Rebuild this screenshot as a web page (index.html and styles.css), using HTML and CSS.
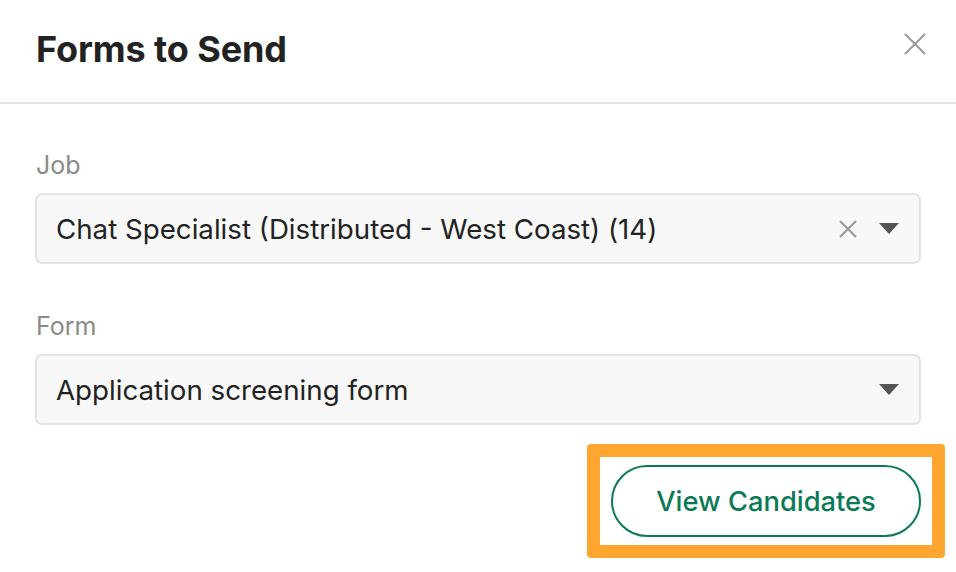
FILE: index.html
```html
<!DOCTYPE html>
<html lang="en">
<head>
<meta charset="utf-8">
<title>Forms to Send</title>
<link rel="stylesheet" href="styles.css">
</head>
<body>
<div class="modal">
  <header class="modal-header">
    <h1 class="modal-title">Forms to Send</h1>
    <button class="close-btn" aria-label="Close">
      <svg width="22" height="22" viewBox="0 0 22 22"><path d="M1 1 L21 21 M21 1 L1 21" stroke="#9a9a9a" stroke-width="2" fill="none"/></svg>
    </button>
  </header>
  <div class="modal-body">
    <div class="field">
      <label class="field-label">Job</label>
      <div class="select">
        <span class="select-value">Chat Specialist (Distributed - West Coast) (14)</span>
        <span class="select-icons">
          <svg class="clear-icon" width="18" height="18" viewBox="0 0 18 18"><path d="M1 1 L17 17 M17 1 L1 17" stroke="#999" stroke-width="2.2" fill="none"/></svg>
          <svg class="caret" width="20" height="11" viewBox="0 0 20 11"><path d="M0 0 H20 L10 11 Z" fill="#555"/></svg>
        </span>
      </div>
    </div>
    <div class="field field-last">
      <label class="field-label">Form</label>
      <div class="select">
        <span class="select-value">Application screening form</span>
        <span class="select-icons">
          <svg class="caret" width="20" height="11" viewBox="0 0 20 11"><path d="M0 0 H20 L10 11 Z" fill="#555"/></svg>
        </span>
      </div>
    </div>
    <div class="actions">
      <div class="highlight">
        <button class="btn-outline">View Candidates</button>
      </div>
    </div>
  </div>
</div>
</body>
</html>
```

FILE: styles.css
```css
* { box-sizing: border-box; }
html, body { margin: 0; padding: 0; background: #fff; }
body {
  font-family: "Inter", "Liberation Sans", sans-serif;
  color: #222;
  width: 956px;
  height: 572px;
  overflow: hidden;
}
.modal { width: 956px; }
.modal-header {
  height: 104px;
  border-bottom: 2px solid #e2e2e2;
  display: flex;
  align-items: flex-start;
  justify-content: space-between;
  padding: 0 30px 0 36px;
}
.modal-title {
  margin: 0;
  padding-top: 28px;
  font-size: 36px;
  line-height: 42px;
  font-weight: 700;
  color: #222;
  letter-spacing: -0.1px;
}
.close-btn {
  margin-top: 33px;
  background: none;
  border: 0;
  padding: 0;
  width: 22px;
  height: 22px;
  cursor: pointer;
}
.close-btn svg { display: block; }
.modal-body {
  padding: 45px 35px 0 35px;
}
.field { margin-bottom: 46px; }
.field-last { margin-bottom: 19px; }
.field-label {
  display: block;
  font-size: 25px;
  line-height: 32px;
  color: #8a8a8a;
  padding-left: 1px;
  margin-bottom: 12px;
}
.select {
  height: 71px;
  border: 2px solid #e3e3e3;
  border-radius: 7px;
  background: #f8f8f8;
  display: flex;
  align-items: center;
  justify-content: space-between;
  padding: 0 20px 0 19px;
}
.select-value {
  font-size: 27.7px;
  color: #222;
}
.select-icons {
  display: flex;
  align-items: center;
  gap: 22px;
}
.select-icons svg { display: block; }
.actions {
  display: flex;
  justify-content: flex-end;
  margin-right: -24px;
}
.highlight {
  border: 13px solid #ffa630;
  border-radius: 4px;
  padding: 8px 11px 8px 11px;
}
.btn-outline {
  display: block;
  width: 310px;
  height: 72px;
  border: 2px solid #0a7a56;
  border-radius: 36px;
  background: #fff;
  color: #0a7a56;
  font-family: "Inter", "Liberation Sans", sans-serif;
  font-size: 27.3px;
  font-weight: 500;
  cursor: pointer;
}
```
